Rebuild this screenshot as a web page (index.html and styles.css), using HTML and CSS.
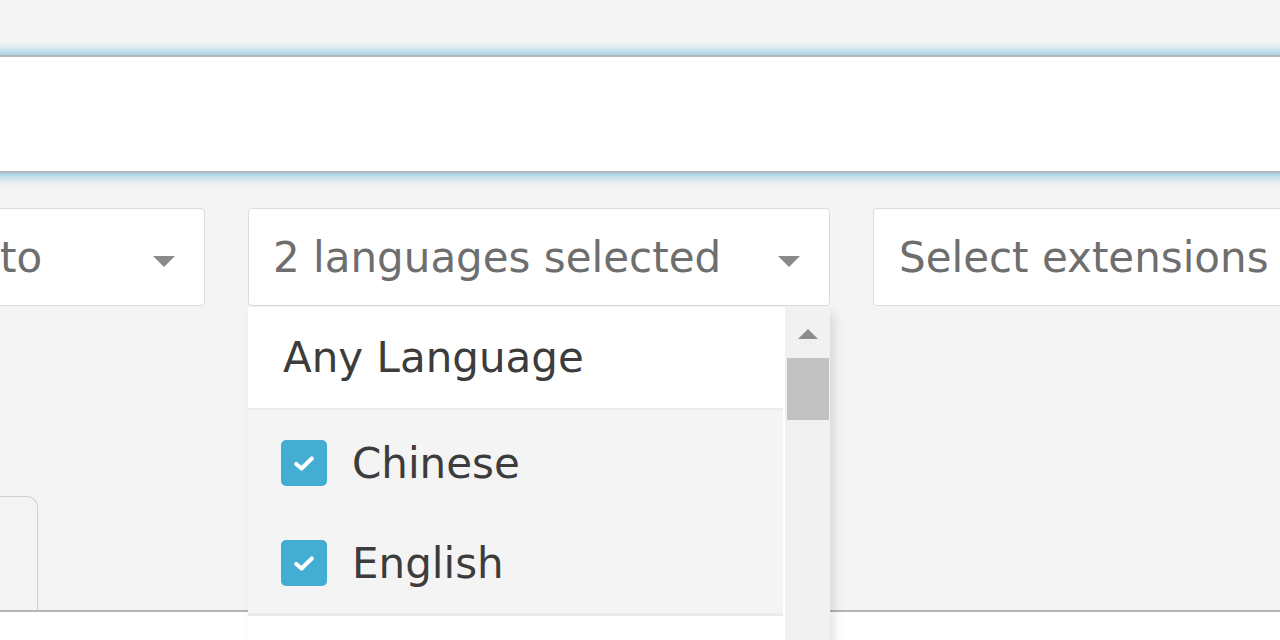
FILE: index.html
```html
<!DOCTYPE html>
<html>
<head>
<meta charset="utf-8">
<link rel="stylesheet" href="styles.css">
</head>
<body>
<div class="page">
  <div class="search"></div>
  <div class="filters">
    <div class="select sel-first">
      <span class="sel-text">to</span>
      <span class="caret"></span>
    </div>
    <div class="select sel-lang">
      <span class="sel-text">2 languages selected</span>
      <span class="caret"></span>
      <div class="dropdown">
        <div class="list">
          <div class="opt opt-any">Any Language</div>
          <div class="group">
            <div class="opt opt-check"><span class="box"><svg viewBox="0 0 16 16" width="26" height="26"><path d="M3.2 8.6 L6.5 11.4 L12.8 5.2" fill="none" stroke="#fff" stroke-width="2.5" stroke-linecap="round" stroke-linejoin="round"/></svg></span>Chinese</div>
            <div class="opt opt-check"><span class="box"><svg viewBox="0 0 16 16" width="26" height="26"><path d="M3.2 8.6 L6.5 11.4 L12.8 5.2" fill="none" stroke="#fff" stroke-width="2.5" stroke-linecap="round" stroke-linejoin="round"/></svg></span>English</div>
          </div>
          <div class="opt opt-next"></div>
        </div>
        <div class="scrollbar">
          <span class="up"></span>
          <span class="thumb"></span>
        </div>
      </div>
    </div>
    <div class="select sel-ext">
      <span class="sel-text">Select extensions</span>
    </div>
  </div>
  <div class="tabs">
    <div class="tab"></div>
  </div>
  <div class="below"></div>
</div>
</body>
</html>
```

FILE: styles.css
```css
html, body {
  margin: 0;
  padding: 0;
  background: #f4f4f4;
  font-family: "DejaVu Sans", "Noto Sans", sans-serif;
}
.page {
  width: 1280px;
  height: 640px;
  overflow: hidden;
  position: relative;
}
.search {
  margin: 55px -20px 0 -20px;
  height: 114px;
  background: #fff;
  border-top: 2px solid #b3b8bb;
  border-bottom: 2px solid #b3b8bb;
  box-shadow: 0 -5px 9px rgba(110, 185, 215, 0.6), 0 5px 9px rgba(110, 185, 215, 0.6);
}
.filters {
  display: flex;
  gap: 43px;
  margin-top: 35px;
  margin-left: -20px;
  height: 98px;
}
.select {
  flex-shrink: 0;
  position: relative;
  box-sizing: border-box;
  height: 98px;
  background: #fff;
  border: 1px solid #dcdcdc;
  border-radius: 4px;
  display: flex;
  align-items: center;
  color: #6e6e6e;
  font-size: 42px;
  white-space: nowrap;
}
.sel-first {
  width: 225px;
  padding-left: 19px;
}
.sel-lang {
  width: 582px;
  padding-left: 24px;
}
.sel-ext {
  width: 440px;
  padding-left: 25px;
}
.caret {
  position: absolute;
  right: 29px;
  top: 47px;
  width: 0;
  height: 0;
  border-left: 11px solid transparent;
  border-right: 11px solid transparent;
  border-top: 11px solid #8a8a8a;
}
.dropdown {
  position: absolute;
  left: -1px;
  top: 98px;
  width: 582px;
  height: 400px;
  display: flex;
  background: #fff;
  box-shadow: 4px 6px 10px rgba(0, 0, 0, 0.12);
  z-index: 5;
}
.list {
  width: 535px;
  background: #fff;
}
.opt {
  box-sizing: border-box;
  display: flex;
  align-items: center;
  color: #3c3c3c;
  font-size: 42px;
  white-space: nowrap;
}
.opt-any {
  height: 103px;
  padding-left: 35px;
  border-bottom: 2px solid #ececec;
}
.group {
  background: #f4f4f4;
  padding-top: 3px;
  border-bottom: 3px solid #ebebeb;
}
.opt-check {
  height: 100px;
  padding-left: 33px;
}
.box {
  width: 46px;
  height: 46px;
  border-radius: 5px;
  background: #44aed2;
  display: flex;
  align-items: center;
  justify-content: center;
  margin-right: 25px;
}
.opt-next {
  height: 100px;
  background: #fff;
}
.scrollbar {
  width: 45px;
  margin-left: 2px;
  background: #f1f1f1;
  display: flex;
  flex-direction: column;
  align-items: center;
}
.up {
  margin-top: 22px;
  width: 0;
  height: 0;
  border-left: 10px solid transparent;
  border-right: 10px solid transparent;
  border-bottom: 10px solid #8c8c8c;
}
.thumb {
  margin-top: 19px;
  width: 42px;
  height: 62px;
  background: #c1c1c1;
}
.tabs {
  margin-top: 190px;
  height: 114px;
  border-bottom: 2px solid #b4b4b4;
  display: flex;
}
.tab {
  width: 60px;
  margin-left: -22px;
  height: 114px;
  box-sizing: border-box;
  border: 1px solid #cfcfcf;
  border-bottom: none;
  border-top-right-radius: 12px;
}
.below {
  height: 40px;
  background: #fff;
}
```
